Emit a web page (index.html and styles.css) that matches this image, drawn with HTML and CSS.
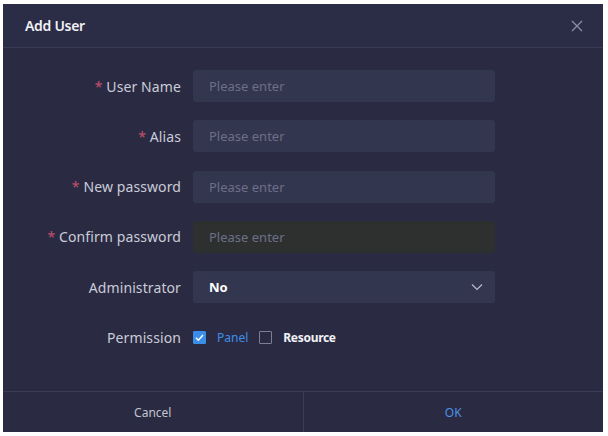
FILE: index.html
```html
<!DOCTYPE html>
<html>
<head>
<meta charset="utf-8">
<link rel="stylesheet" href="styles.css">
</head>
<body>
<div class="dialog">
  <div class="header">
    <span class="title">Add User</span>
    <svg class="close" width="12" height="12" viewBox="0 0 12 12"><path d="M1 1L11 11M11 1L1 11" stroke="#8c8fa6" stroke-width="1.3" fill="none"/></svg>
  </div>
  <div class="body">
    <div class="row">
      <label class="label"><span class="req">*</span> User Name</label>
      <div class="input">Please enter</div>
    </div>
    <div class="row">
      <label class="label"><span class="req">*</span> Alias</label>
      <div class="input">Please enter</div>
    </div>
    <div class="row">
      <label class="label"><span class="req">*</span> New password</label>
      <div class="input">Please enter</div>
    </div>
    <div class="row">
      <label class="label"><span class="req">*</span> Confirm password</label>
      <div class="input dark">Please enter</div>
    </div>
    <div class="row">
      <label class="label">Administrator</label>
      <div class="input select"><span class="value">No</span>
        <svg width="12" height="8" viewBox="0 0 12 8"><path d="M1 1.5L6 6.5L11 1.5" stroke="#b8bacb" stroke-width="1.2" fill="none"/></svg>
      </div>
    </div>
    <div class="row">
      <label class="label">Permission</label>
      <div class="checks">
        <span class="box checked"><svg width="13" height="13" viewBox="0 0 13 13"><path d="M3 6.8L5.4 9.2L10 4" stroke="#fff" stroke-width="1.4" fill="none"/></svg></span>
        <span class="ctext blue">Panel</span>
        <span class="box"></span>
        <span class="ctext bold">Resource</span>
      </div>
    </div>
  </div>
  <div class="footer">
    <div class="btn cancel">Cancel</div>
    <div class="btn ok">OK</div>
  </div>
</div>
</body>
</html>
```
FILE: styles.css
```css
html, body {
  margin: 0;
  padding: 0;
  background: #ffffff;
}
body {
  padding: 4px 5px 4px 3px;
  font-family: "Noto Sans", "Open Sans", sans-serif;
}
.dialog {
  width: 600px;
  height: 428px;
  background: #2a2b43;
  display: flex;
  flex-direction: column;
}
.header {
  height: 43px;
  border-bottom: 1px solid #383a56;
  background: #2b2d47;
  display: flex;
  align-items: center;
  justify-content: space-between;
  padding: 0 20px 0 22px;
}
.title {
  color: #f1f1f6;
  font-size: 14px;
  font-weight: 600;
  letter-spacing: -0.3px;
}
.body {
  flex: 1;
  padding-top: 22px;
  display: flex;
  flex-direction: column;
  gap: 18.3px;
}
.row {
  display: flex;
  align-items: center;
  height: 32px;
}
.label {
  width: 178px;
  text-align: right;
  padding-right: 12px;
  color: #cacbd9;
  font-size: 14px;
  letter-spacing: 0.1px;
}
.req {
  color: #c4506c;
}
.input {
  width: 302px;
  height: 32px;
  box-sizing: border-box;
  padding: 0 16px;
  background: #33364f;
  border-radius: 3px;
  color: #6c6f88;
  font-size: 13px;
  display: flex;
  align-items: center;
}
.input.dark {
  background: #2e3030;
}
.select {
  justify-content: space-between;
  padding-right: 12px;
}
.select .value {
  color: #ffffff;
  font-weight: 700;
  font-size: 13px;
}
.checks {
  display: flex;
  align-items: center;
}
.box {
  width: 13px;
  height: 13px;
  box-sizing: border-box;
  border: 1px solid #7c7f95;
  border-radius: 1px;
  display: inline-flex;
}
.box.checked {
  background: #3b8ee8;
  border-color: #3b8ee8;
}
.box.checked svg {
  margin: -1px;
}
.ctext {
  font-size: 12px;
  margin: 0 11px;
}
.blue {
  color: #3f8ee6;
}
.bold {
  color: #f1f1f6;
  font-weight: 700;
  letter-spacing: -0.3px;
}
.footer {
  height: 40px;
  border-top: 1px solid #3a3c58;
  display: flex;
}
.btn {
  flex: 1;
  display: flex;
  align-items: center;
  justify-content: center;
  font-size: 12px;
}
.cancel {
  color: #c2c3cf;
  border-right: 1px solid #3a3c58;
}
.ok {
  color: #4a92e4;
}
```
